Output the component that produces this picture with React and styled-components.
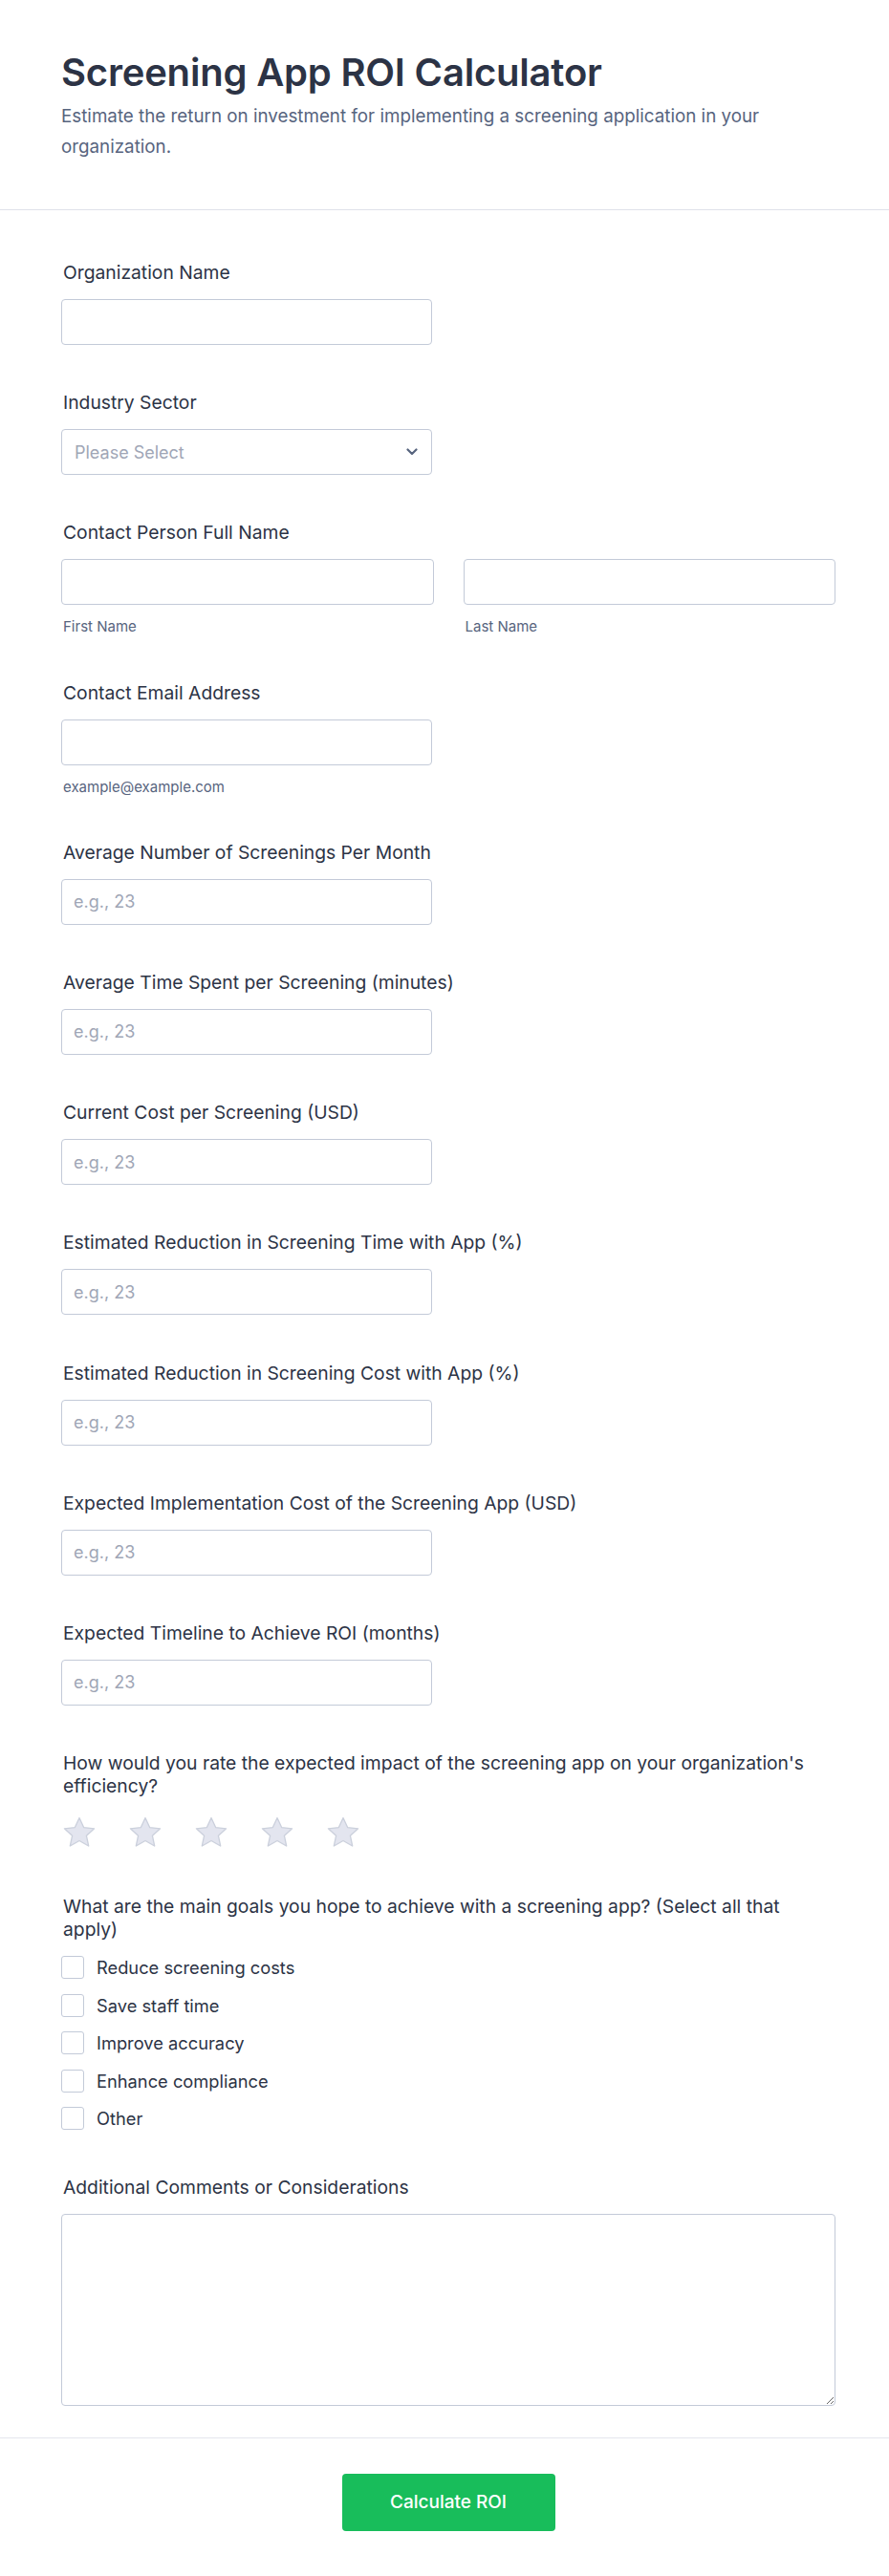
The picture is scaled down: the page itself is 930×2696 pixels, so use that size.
import React from "react";
import styled, { createGlobalStyle } from "styled-components";

const GlobalStyle = createGlobalStyle`
  * { box-sizing: border-box; }
  body {
    margin: 0;
    background: #ffffff;
    font-family: Inter, "Noto Sans", "Liberation Sans", sans-serif;
    color: #2c3345;
  }
`;

const numberFields = [
  "Average Number of Screenings Per Month",
  "Average Time Spent per Screening (minutes)",
  "Current Cost per Screening (USD)",
  "Estimated Reduction in Screening Time with App (%)",
  "Estimated Reduction in Screening Cost with App (%)",
  "Expected Implementation Cost of the Screening App (USD)",
  "Expected Timeline to Achieve ROI (months)",
];

const goals = [
  "Reduce screening costs",
  "Save staff time",
  "Improve accuracy",
  "Enhance compliance",
  "Other",
];

function Star() {
  return (
    <svg width="38" height="38" viewBox="0 -2 38 38">
      <path
        d="M19 3.5l4.6 10.1 11 1.2-8.2 7.4 2.3 10.8L19 27.5 9.3 33l2.3-10.8-8.2-7.4 11-1.2z"
        fill="#e3e5ef"
        stroke="#cbd0dc"
        strokeWidth="1.3"
        strokeLinejoin="round"
      />
    </svg>
  );
}

function Chevron() {
  return (
    <svg width="12" height="8" viewBox="0 0 12 8">
      <path
        d="M1.5 1.5L6 6l4.5-4.5"
        fill="none"
        stroke="#57647e"
        strokeWidth="2.2"
        strokeLinecap="round"
        strokeLinejoin="round"
      />
    </svg>
  );
}

export default function App() {
  return (
    <Page>
      <GlobalStyle />
      <Header>
        <Inner>
          <Title>Screening App ROI Calculator</Title>
          <Subtitle>
            Estimate the return on investment for implementing a screening
            application in your organization.
          </Subtitle>
        </Inner>
      </Header>

      <Form>
        <Inner>
          <Field>
            <Label>Organization Name</Label>
            <TextInput type="text" />
          </Field>

          <Field>
            <Label>Industry Sector</Label>
            <SelectBox>
              <span>Please Select</span>
              <Chevron />
            </SelectBox>
          </Field>

          <Field>
            <Label>Contact Person Full Name</Label>
            <NameRow>
              <div>
                <TextInput type="text" $full />
                <Sublabel>First Name</Sublabel>
              </div>
              <div>
                <TextInput type="text" $full />
                <Sublabel>Last Name</Sublabel>
              </div>
            </NameRow>
          </Field>

          <Field>
            <Label>Contact Email Address</Label>
            <TextInput type="email" />
            <Sublabel>example@example.com</Sublabel>
          </Field>

          {numberFields.map((label) => (
            <Field key={label}>
              <Label>{label}</Label>
              <TextInput type="text" placeholder="e.g., 23" />
            </Field>
          ))}

          <Field>
            <Label>
              How would you rate the expected impact of the screening app on
              your organization's efficiency?
            </Label>
            <Stars>
              {[0, 1, 2, 3, 4].map((i) => (
                <Star key={i} />
              ))}
            </Stars>
          </Field>

          <Field>
            <Label>
              <NoWrap>
                What are the main goals you hope to achieve with a screening
                app? (Select all that
              </NoWrap>
              <br />
              apply)
            </Label>
            <Options>
              {goals.map((g) => (
                <Option key={g}>
                  <Check type="checkbox" />
                  <span>{g}</span>
                </Option>
              ))}
            </Options>
          </Field>

          <Field>
            <Label>Additional Comments or Considerations</Label>
            <TextArea />
          </Field>
        </Inner>
      </Form>

      <Footer>
        <Inner>
          <SubmitButton type="button">Calculate ROI</SubmitButton>
        </Inner>
      </Footer>
    </Page>
  );
}

const Page = styled.div`
  width: 100%;
  background: #ffffff;
`;

const Inner = styled.div`
  padding: 0 56px 0 64px;
`;

const Header = styled.header`
  padding: 52px 0 50px;
  border-bottom: 1px solid #dfe1ea;
`;

const Title = styled.h1`
  margin: 0 0 6px;
  font-size: 40px;
  line-height: 48px;
  font-weight: 600;
  color: #2c3345;
  letter-spacing: -0.2px;
`;

const Subtitle = styled.p`
  margin: 0;
  font-size: 18.8px;
  line-height: 31.5px;
  color: #57647e;
  max-width: 800px;
`;

const Form = styled.div`
  padding: 29px 0 8px;
`;

const Field = styled.div`
  padding: 24px 0 24.2px;
  display: flex;
  flex-direction: column;
`;

const Label = styled.label`
  padding-left: 2px;
  font-size: 19.3px;
  line-height: 24px;
  font-weight: 400;
  color: #2c3345;
  margin-bottom: 16px;
`;

const NoWrap = styled.span`
  white-space: nowrap;
`;

const TextInput = styled.input`
  display: block;
  width: ${(p) => (p.$full ? "100%" : "388px")};
  height: 48px;
  padding: 0 12px;
  border: 1px solid #c3cad8;
  border-radius: 4px;
  background: #ffffff;
  font-family: inherit;
  font-size: 18px;
  color: #2c3345;
  outline: none;

  &::placeholder {
    color: #a0a6b6;
  }
`;

const SelectBox = styled.div`
  width: 388px;
  height: 48px;
  padding: 0 14px 0 13px;
  border: 1px solid #c3cad8;
  border-radius: 4px;
  display: flex;
  align-items: center;
  justify-content: space-between;
  font-size: 18px;
  color: #a0a6b6;
`;

const NameRow = styled.div`
  display: grid;
  grid-template-columns: 1fr 1fr;
  gap: 31px;
`;

const Sublabel = styled.div`
  margin-top: 14px;
  padding-left: 2px;
  font-size: 15px;
  line-height: 17px;
  color: #57647e;
`;

const Stars = styled.div`
  display: flex;
  gap: 31px;
`;

const Options = styled.div`
  display: flex;
  flex-direction: column;
  gap: 15.5px;
`;

const Option = styled.label`
  display: flex;
  align-items: center;
  gap: 13px;
  font-size: 18.3px;
  line-height: 24px;
  color: #2c3345;
`;

const Check = styled.input`
  appearance: none;
  margin: 0;
  width: 24px;
  height: 24px;
  border: 1px solid #c3cad8;
  border-radius: 3px;
  background: #ffffff;
`;

const TextArea = styled.textarea`
  display: block;
  width: 100%;
  height: 201px;
  padding: 12px;
  border: 1px solid #c3cad8;
  border-radius: 4px;
  font-family: inherit;
  font-size: 18px;
  resize: vertical;
  outline: none;
`;

const Footer = styled.footer`
  border-top: 1px solid #e4e6ee;
  padding: 37px 0 49px;

  & > div {
    display: flex;
    justify-content: center;
  }
`;

const SubmitButton = styled.button`
  width: 223px;
  height: 60px;
  border: none;
  border-radius: 4px;
  background: #18bd5b;
  color: #ffffff;
  font-family: inherit;
  font-size: 19px;
  font-weight: 500;
  cursor: pointer;
`;
